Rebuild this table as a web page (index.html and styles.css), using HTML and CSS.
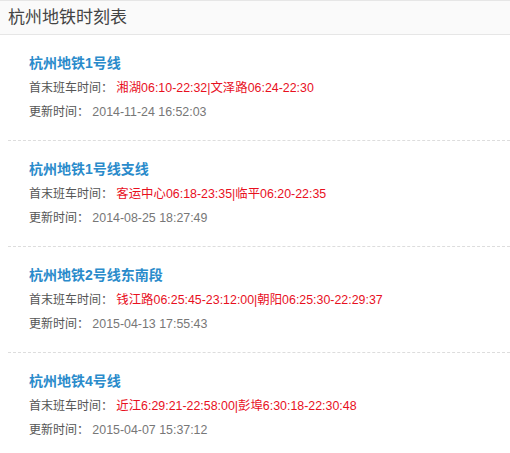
FILE: index.html
```html
<!DOCTYPE html>
<html lang="zh-CN">
<head>
  <meta charset="UTF-8">
  <meta name="viewport" content="width=device-width, initial-scale=1.0">
  <link rel="stylesheet" href="styles.css">
  <title>杭州地铁时刻表</title>
</head>
<body>
  <div class="header">杭州地铁时刻表</div>
  <ul class="lines">
    <li class="line">
      <h3>杭州地铁1号线</h3>
      <p>首末班车时间： <span class="time">湘湖06:10-22:32|文泽路06:24-22:30</span></p>
      <p>更新时间： <span class="date">2014-11-24 16:52:03</span></p>
    </li>
    <li class="line">
      <h3>杭州地铁1号线支线</h3>
      <p>首末班车时间： <span class="time">客运中心06:18-23:35|临平06:20-22:35</span></p>
      <p>更新时间： <span class="date">2014-08-25 18:27:49</span></p>
    </li>
    <li class="line">
      <h3>杭州地铁2号线东南段</h3>
      <p>首末班车时间： <span class="time">钱江路06:25:45-23:12:00|朝阳06:25:30-22:29:37</span></p>
      <p>更新时间： <span class="date">2015-04-13 17:55:43</span></p>
    </li>
    <li class="line">
      <h3>杭州地铁4号线</h3>
      <p>首末班车时间： <span class="time">近江6:29:21-22:58:00|彭埠6:30:18-22:30:48</span></p>
      <p>更新时间： <span class="date">2015-04-07 15:37:12</span></p>
    </li>
  </ul>
</body>
</html>
```

FILE: styles.css
```css
body {
  margin: 0;
  font-family: 'Liberation Sans', Arial, 'Noto Sans CJK SC', sans-serif;
  background: #fff;
}

.header {
  height: 33px;
  line-height: 33px;
  padding-left: 8px;
  font-size: 17px;
  color: #444;
  background-color: #fafafa;
  border-top: 1px solid #e6e6e6;
  border-bottom: 1px solid #e6e6e6;
}

.lines {
  list-style: none;
  margin: 0 0 0 8px;
  padding: 0;
}

.line {
  padding: 15px 0 16px 21px;
  border-bottom: 1px dashed #ddd;
}

.line h3 {
  margin: 0;
  font-size: 14px;
  line-height: 26px;
  color: #2a8bcb;
}

.line p {
  margin: 0;
  font-size: 12px;
  line-height: 24px;
  color: #555;
}

.line .time {
  font-size: 12.4px;
  color: #e8101e;
}

.line .date {
  font-size: 12.4px;
  color: #777;
}
```
